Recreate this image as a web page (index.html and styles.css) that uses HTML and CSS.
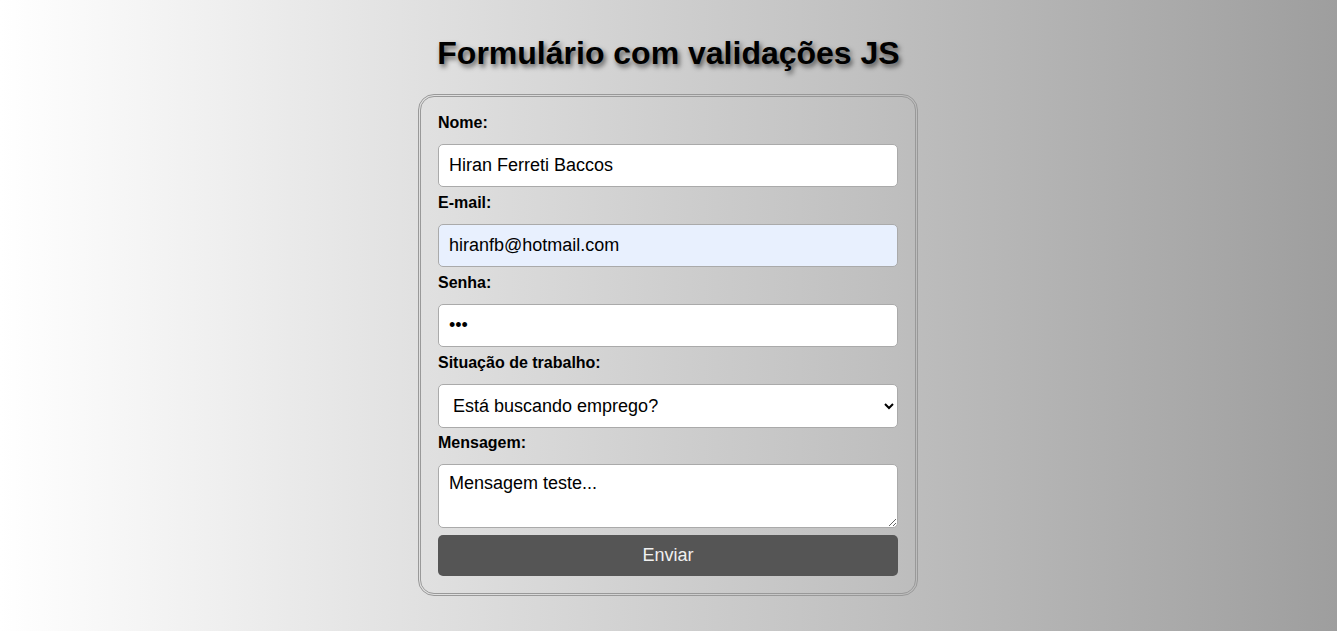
FILE: index.html
```html
<!DOCTYPE html>
<html lang="pt-BR">
<head>
<meta charset="utf-8">
<title>Formulário com validações JS</title>
<link rel="stylesheet" href="styles.css">
</head>
<body>
<h1 class="title">Formulário com validações JS</h1>
<form class="form">
  <label class="label" for="nome">Nome:</label>
  <input class="field" id="nome" type="text" value="Hiran Ferreti Baccos">
  <label class="label" for="email">E-mail:</label>
  <input class="field field-autofill" id="email" type="email" value="hiranfb@hotmail.com">
  <label class="label" for="senha">Senha:</label>
  <input class="field" id="senha" type="password" value="123">
  <label class="label" for="sit">Situação de trabalho:</label>
  <select class="field select" id="sit">
    <option>Está buscando emprego?</option>
  </select>
  <label class="label label-tight" for="msg">Mensagem:</label>
  <textarea class="field textarea" id="msg">Mensagem teste...</textarea>
  <button class="button" type="button">Enviar</button>
</form>
</body>
</html>
```
FILE: styles.css
```css
html, body {
  margin: 0;
  padding: 0;
  height: 100%;
}
body {
  background: linear-gradient(to right, #ffffff 0%, #9e9e9e 100%);
  font-family: "Liberation Sans", Arial, sans-serif;
  display: flex;
  flex-direction: column;
  align-items: center;
}
.title {
  margin: 35px 0 22px;
  font-size: 32px;
  line-height: 37px;
  font-weight: bold;
  color: #000;
  text-shadow: 2px 3px 5px rgba(0, 0, 0, 0.6);
}
.form {
  width: 460px;
  border: 3px double #999;
  border-radius: 16px;
  padding: 10px 17px 17px;
  margin-right: 1px;
  display: flex;
  flex-direction: column;
}
.label {
  font-size: 16px;
  line-height: 18px;
  font-weight: bold;
  color: #000;
  margin: 7px 0 12px;
}
.label-tight {
  margin-top: 6px;
}
.field {
  box-sizing: border-box;
  width: 100%;
  height: 43px;
  border: 1px solid #aaa;
  border-radius: 5px;
  background: #fff;
  padding: 0 10px;
  font-family: "Liberation Sans", Arial, sans-serif;
  font-size: 18px;
  color: #000;
  margin: 0;
}
.field-autofill {
  background: #e8f0fe;
}
.select {
  height: 44px;
  padding: 0 10px;
}
.textarea {
  display: block;
  height: 64px;
  padding: 8px 10px;
  resize: vertical;
  line-height: 21px;
}
.button {
  margin-top: 7px;
  height: 41px;
  border: none;
  border-radius: 5px;
  background: #555;
  color: #f0f0f0;
  font-family: "Liberation Sans", Arial, sans-serif;
  font-size: 18px;
}
```
